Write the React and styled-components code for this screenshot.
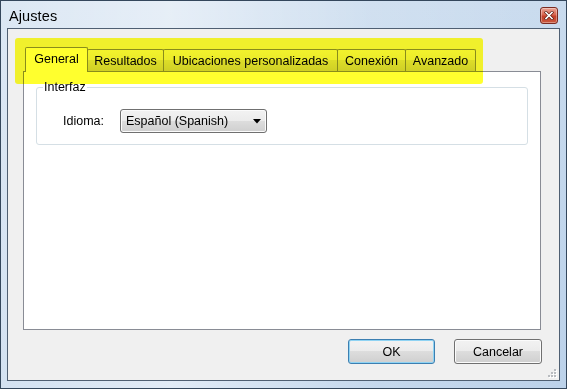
import React from "react";
import styled, { createGlobalStyle } from "styled-components";

const GlobalStyle = createGlobalStyle`
  html, body { margin: 0; padding: 0; width: 567px; height: 389px; overflow: hidden; background: #ffffff; }
  body { font-family: "Liberation Sans", Arial, sans-serif; }
  * { box-sizing: border-box; }
`;

const Window = styled.div`
  width: 567px;
  height: 389px;
  display: flex;
  flex-direction: column;
  padding: 0 6px 7px 6px;
  border: 1px solid #34475c;
  background:
    linear-gradient(90deg, rgba(255,255,255,0.35) 0%, rgba(255,255,255,0.55) 30%, rgba(255,255,255,0.15) 65%, rgba(255,255,255,0) 100%),
    linear-gradient(180deg, #c9dbee 0%, #bcd2ea 100%);
`;

const TitleBar = styled.div`
  height: 27px;
  display: flex;
  align-items: center;
  justify-content: space-between;
  padding: 2px 2px 0 2px;
`;

const Title = styled.span`
  font-size: 14.5px;
  color: #000;
  letter-spacing: 0.1px;
`;

const CloseButton = styled.div`
  width: 18px;
  height: 17px;
  border: 1px solid #7a2b22;
  border-radius: 3px;
  background: linear-gradient(180deg, #eaa597 0%, #d9654f 45%, #c5402a 55%, #c9573c 100%);
  box-shadow: inset 0 0 0 1px rgba(255,255,255,0.35);
  display: flex;
  align-items: center;
  justify-content: center;
`;

const Client = styled.div`
  flex: 1;
  position: relative;
  display: flex;
  flex-direction: column;
  background: #f0f0f0;
  border: 1px solid #4f5f72;
  padding: 18px 17px 16px 15px;
`;

const Highlight = styled.div`
  position: absolute;
  left: 7px;
  top: 9px;
  width: 468px;
  height: 46px;
  border-radius: 3px;
  background: #ffff2e;
  mix-blend-mode: multiply;
  pointer-events: none;
  z-index: 5;
`;

const TabControl = styled.div`
  flex: 1;
  display: flex;
  flex-direction: column;
  margin-right: 1px;
`;

const TabStrip = styled.div`
  height: 24px;
  display: flex;
  align-items: flex-end;
  padding-left: 2px;
`;

const Tab = styled.div`
  position: relative;
  width: ${(p) => p.$w}px;
  height: ${(p) => (p.$active ? 25 : 22)}px;
  margin-left: ${(p) => (p.$first ? 0 : -1)}px;
  margin-bottom: ${(p) => (p.$active ? -1 : 0)}px;
  z-index: ${(p) => (p.$active ? 2 : 1)};
  border: 1px solid #898c95;
  border-bottom: none;
  border-radius: 2px 2px 0 0;
  background: ${(p) =>
    p.$active
      ? "#ffffff"
      : "linear-gradient(180deg, #f2f2f2 0%, #ebebeb 50%, #dddddd 50%, #cfcfcf 100%)"};
  display: flex;
  align-items: center;
  justify-content: center;
  padding-bottom: ${(p) => (p.$active ? 3 : 0)}px;
  font-size: 12.5px;
  color: #000;
  white-space: nowrap;
`;

const Panel = styled.div`
  flex: 1;
  background: #ffffff;
  border: 1px solid #898c95;
  padding: 8px 12px 0 12px;
`;

const GroupBox = styled.fieldset`
  margin: 0;
  padding: 0 0 11px 0;
  border: 1px solid #d5dfe5;
  border-radius: 3px;
`;

const Legend = styled.legend`
  margin-left: 6px;
  padding: 0 1px;
  font-size: 12.5px;
  line-height: 14px;
  color: #000;
`;

const FieldRow = styled.div`
  display: flex;
  align-items: center;
  padding-left: 26px;
  margin-top: 15px;
`;

const FieldLabel = styled.span`
  font-size: 12.5px;
  color: #000;
  width: 57px;
`;

const Combo = styled.div`
  width: 147px;
  height: 24px;
  border: 1px solid #707070;
  border-radius: 3px;
  background: linear-gradient(180deg, #f2f2f2 0%, #ebebeb 50%, #dddddd 50%, #cfcfcf 100%);
  box-shadow: inset 0 0 0 1px #fbfbfb;
  display: flex;
  align-items: center;
  justify-content: space-between;
  padding: 0 5px 0 5px;
  font-size: 12.5px;
  color: #000;
`;

const ButtonRow = styled.div`
  margin-top: 9px;
  display: flex;
  justify-content: flex-end;
  gap: 19px;
`;

const Button = styled.div`
  width: ${(p) => p.$w}px;
  height: 25px;
  border: 1px solid ${(p) => (p.$default ? "#3c7fb1" : "#707070")};
  border-radius: 3px;
  background: linear-gradient(180deg, #f2f2f2 0%, #ebebeb 50%, #dddddd 50%, #cfcfcf 100%);
  box-shadow: inset 0 0 0 1px ${(p) => (p.$default ? "#8fd3f3" : "#fbfbfb")};
  display: flex;
  align-items: center;
  justify-content: center;
  font-size: 12.5px;
  color: #000;
`;

const Grip = styled.div`
  position: absolute;
  right: 2px;
  bottom: 2px;
  width: 10px;
  height: 10px;
  display: flex;
`;

const tabs = [
  { label: "General", w: 63, active: true },
  { label: "Resultados", w: 77 },
  { label: "Ubicaciones personalizadas", w: 175 },
  { label: "Conexión", w: 69 },
  { label: "Avanzado", w: 71 },
];

export default function App() {
  return (
    <>
      <GlobalStyle />
      <Window>
        <TitleBar>
          <Title>Ajustes</Title>
          <CloseButton>
            <svg width="10" height="9" viewBox="0 0 10 9">
              <path d="M2 1.5 L8 7.5 M8 1.5 L2 7.5" stroke="#5a1a12" strokeWidth="3" strokeLinecap="square" />
              <path d="M2 1.5 L8 7.5 M8 1.5 L2 7.5" stroke="#ffffff" strokeWidth="1.6" strokeLinecap="square" />
            </svg>
          </CloseButton>
        </TitleBar>
        <Client>
          <Highlight />
          <TabControl>
            <TabStrip>
              {tabs.map((t, i) => (
                <Tab key={t.label} $w={t.w} $active={t.active} $first={i === 0}>
                  {t.label}
                </Tab>
              ))}
            </TabStrip>
            <Panel>
              <GroupBox>
                <Legend>Interfaz</Legend>
                <FieldRow>
                  <FieldLabel>Idioma:</FieldLabel>
                  <Combo>
                    <span>Español (Spanish)</span>
                    <svg width="8" height="5" viewBox="0 0 8 5">
                      <path d="M0 0 H8 L4 4.5 Z" fill="#000" />
                    </svg>
                  </Combo>
                </FieldRow>
              </GroupBox>
            </Panel>
          </TabControl>
          <ButtonRow>
            <Button $w={87} $default>OK</Button>
            <Button $w={88}>Cancelar</Button>
          </ButtonRow>
          <Grip>
            <svg width="10" height="10" viewBox="0 0 10 10">
              {[[7, 1], [4, 4], [7, 4], [1, 7], [4, 7], [7, 7]].map(([x, y]) => (
                <g key={`${x}-${y}`}>
                  <rect x={x + 1} y={y + 1} width="2" height="2" fill="#ffffff" />
                  <rect x={x} y={y} width="2" height="2" fill="#b9bcc0" />
                </g>
              ))}
            </svg>
          </Grip>
        </Client>
      </Window>
    </>
  );
}
